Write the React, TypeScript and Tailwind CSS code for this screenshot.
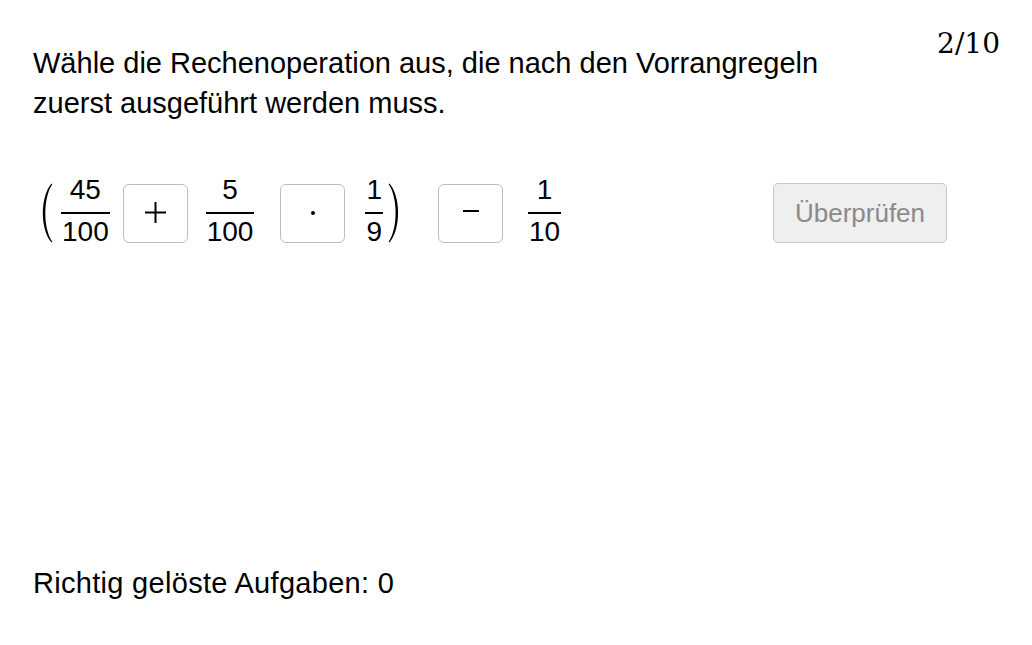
import React from "react";

function Frac({ n, d, className = "" }: { n: string; d: string; className?: string }) {
  return (
    <div className={`flex flex-col items-center pb-[4.5px] ${className}`}>
      <div className="leading-[30px] text-[28px] px-[1px]">{n}</div>
      <div className="h-[1.5px] w-full bg-black mt-[7px]" />
      <div className="leading-[30px] text-[28px] mt-[3px] px-[1px]">{d}</div>
    </div>
  );
}

function OpBox({ children, className = "" }: { children: React.ReactNode; className?: string }) {
  return (
    <button className={`w-[65px] h-[59px] rounded-[6px] border border-[#bdbdbd] bg-white flex items-center justify-center text-black ${className}`}>
      {children}
    </button>
  );
}

function Paren({ right = false, className = "" }: { right?: boolean; className?: string }) {
  return (
    <svg width="16" height="60" viewBox="0 0 16 60" className={className} style={right ? { transform: "scaleX(-1)" } : undefined}>
      <path d="M14.5 0.5 C3 14 3 46 14.5 59.5 L15.3 58.8 C6 45 6 15 15.3 1.2 Z" fill="#000" />
    </svg>
  );
}

export default function App() {
  return (
    <div
      className="w-[1032px] h-[645px] bg-white text-black flex flex-col px-[33px] pt-[24px] pb-[42px]"
      style={{ fontFamily: '"Liberation Sans", Arial, sans-serif' }}
    >
      <div className="flex justify-between items-start">
        <p className="mt-[19px] max-w-[840px] text-[29px] leading-[40px]">
          Wähle die Rechenoperation aus, die nach den Vorrangregeln zuerst ausgeführt werden muss.
        </p>
        <div
          className="text-[28px] leading-[40px] -mr-[1px]"
          style={{ fontFamily: '"DejaVu Serif", serif' }}
        >
          2/10
        </div>
      </div>

      <div className="flex items-center mt-[52px]">
        <Paren className="ml-[4px]" />
        <Frac n="45" d="100" className="ml-[8px]" />
        <OpBox className="ml-[13px]">
          <svg width="21" height="21" viewBox="0 0 21 21" className="mt-[-1px]">
            <path d="M10.5 0 V21 M0 10.5 H21" stroke="#000" strokeWidth="2" />
          </svg>
        </OpBox>
        <Frac n="5" d="100" className="ml-[18px]" />
        <OpBox className="ml-[26px]">
          <span className="block w-[4px] h-[4px] rounded-full bg-black" />
        </OpBox>
        <Frac n="1" d="9" className="ml-[20px]" />
        <Paren right className="ml-[5px]" />
        <OpBox className="ml-[34px]">
          <span className="block w-[16px] h-[2px] bg-black mt-[-4px]" />
        </OpBox>
        <Frac n="1" d="10" className="ml-[25px]" />
        <button className="ml-auto mr-[52px] w-[174px] h-[60px] rounded-[5px] border border-[#c8c8c8] bg-[#efefef] text-[#8a8a8a] text-[26px] leading-none">
          Überprüfen
        </button>
      </div>

      <p className="mt-auto text-[29px] leading-[40px] tracking-[0.3px]">Richtig gelöste Aufgaben: 0</p>
    </div>
  );
}
